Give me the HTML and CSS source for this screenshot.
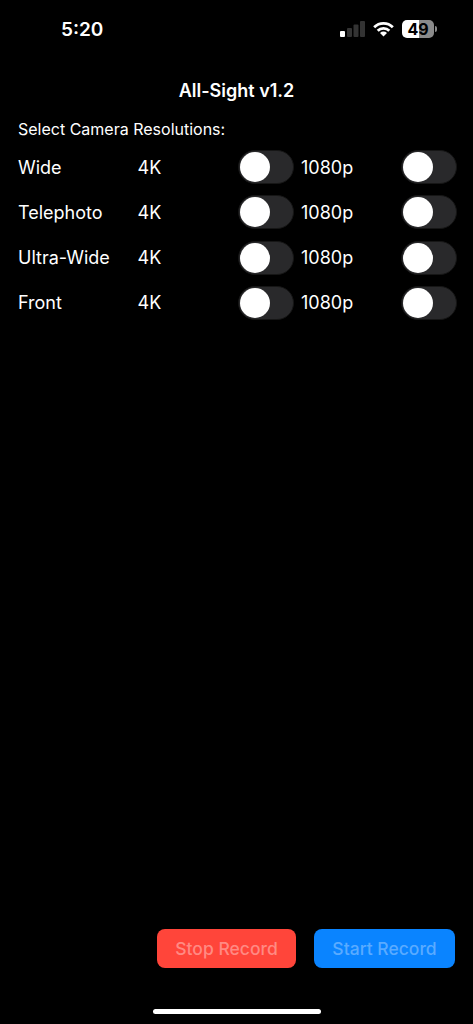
FILE: index.html
```html
<!DOCTYPE html>
<html lang="en">
<head>
<meta charset="utf-8">
<title>All-Sight</title>
<link rel="stylesheet" href="styles.css">
</head>
<body>
<div class="screen">
  <header class="status">
    <span class="time">5:20</span>
    <div class="status-icons">
      <svg class="signal" width="25" height="16" viewBox="0 0 25 16">
        <rect x="0" y="10" width="5" height="6" rx="1" fill="#fff"/>
        <rect x="7" y="7" width="5" height="9" rx="1" fill="#333"/>
        <rect x="13.500" y="3.500" width="5" height="12.500" rx="1" fill="#333"/>
        <rect x="20" y="0" width="5" height="16" rx="1" fill="#333"/>
      </svg>
      <svg class="wifi" width="21" height="16" viewBox="0 0 21 16">
        <path d="M10.500 15.500L7 12A5 5 0 0 1 14 12Z" fill="#fff"/>
        <path d="M4.700 9.700A8.200 8.200 0 0 1 16.300 9.700" fill="none" stroke="#fff" stroke-width="2.800"/>
        <path d="M1.170 6.170A13.200 13.200 0 0 1 19.830 6.170" fill="none" stroke="#fff" stroke-width="2.800"/>
      </svg>
      <div class="battery">
        <div class="battery-body"><span class="battery-text">49</span></div>
        <div class="battery-cap"></div>
      </div>
    </div>
  </header>

  <h1 class="title">All-Sight v1.2</h1>
  <p class="subtitle">Select Camera Resolutions:</p>

  <div class="rows">
    <div class="row">
      <span>Wide</span><span>4K</span><div class="toggle"><div class="knob"></div></div><span>1080p</span><div class="toggle"><div class="knob"></div></div>
    </div>
    <div class="row">
      <span>Telephoto</span><span>4K</span><div class="toggle"><div class="knob"></div></div><span>1080p</span><div class="toggle"><div class="knob"></div></div>
    </div>
    <div class="row">
      <span>Ultra-Wide</span><span>4K</span><div class="toggle"><div class="knob"></div></div><span>1080p</span><div class="toggle"><div class="knob"></div></div>
    </div>
    <div class="row">
      <span>Front</span><span>4K</span><div class="toggle"><div class="knob"></div></div><span>1080p</span><div class="toggle"><div class="knob"></div></div>
    </div>
  </div>

  <div class="actions">
    <div class="btn btn-stop"><span>Stop Record</span></div>
    <div class="btn btn-start"><span>Start Record</span></div>
  </div>
  <div class="home-wrap"><div class="home"></div></div>
</div>
</body>
</html>
```

FILE: styles.css
```css
* { box-sizing: border-box; }
html, body { margin: 0; padding: 0; background: #000; }
body { font-family: Inter, "Liberation Sans", sans-serif; color: #fff; }

.screen {
  width: 473px;
  height: 1024px;
  display: flex;
  flex-direction: column;
  overflow: hidden;
  background: #000;
}

.status {
  height: 58px;
  flex: none;
  display: flex;
  align-items: center;
  justify-content: space-between;
  padding: 0 36px 0 61px;
}
.time { font-size: 19px; font-weight: 600; }
.status-icons { display: flex; align-items: center; gap: 8px; }
.signal { display: block; width: 25px; height: 16px; }
.wifi { display: block; width: 21px; height: 16px; }
.battery { display: flex; align-items: center; gap: 1px; }
.battery-body {
  width: 32px;
  height: 18px;
  border-radius: 5px;
  background: linear-gradient(90deg, #fff 0, #fff 52%, #8a8a8a 52%, #8a8a8a 100%);
  display: flex;
  align-items: center;
  justify-content: center;
}
.battery-text { color: #000; font-size: 16px; font-weight: 700; line-height: 1; }
.battery-cap { width: 2px; height: 6px; border-radius: 0 2px 2px 0; background: #8a8a8a; }

.title {
  margin: 22px 0 0;
  height: 22px;
  font-size: 18px;
  line-height: 22px;
  font-weight: 600;
  text-align: center;
}
.subtitle {
  margin: 17px 0 0 18px;
  height: 20px;
  font-size: 16px;
  line-height: 20px;
  font-weight: 400;
}

.rows {
  margin-top: 11px;
  padding-left: 18px;
  display: flex;
  flex-direction: column;
  gap: 11.300px;
}
.row {
  display: grid;
  grid-template-columns: 119.500px 100.500px 63px 100px 56px;
  align-items: center;
  height: 34px;
  font-size: 18px;
  font-weight: 400;
}
.toggle {
  width: 56px;
  height: 34px;
  border-radius: 17px;
  background: #29292b;
  border: 1px solid #161616;
  padding: 1px;
}
.knob { width: 30px; height: 30px; border-radius: 50%; background: #fff; }

.actions {
  margin-top: auto;
  display: flex;
  justify-content: flex-end;
  gap: 18px;
  padding-right: 18px;
}
.btn {
  height: 39px;
  border-radius: 8px;
  display: flex;
  align-items: center;
  justify-content: center;
  font-size: 17.500px;
  font-weight: 500;
}
.btn-stop { width: 139px; background: #ff453a; color: #ff8a83; }
.btn-start { width: 141px; background: #0a84ff; color: #5aabff; }

.home-wrap {
  flex: none;
  height: 56px;
  padding-top: 41px;
  display: flex;
  justify-content: center;
}
.home { width: 168px; height: 5px; border-radius: 3px; background: #fff; }
```
